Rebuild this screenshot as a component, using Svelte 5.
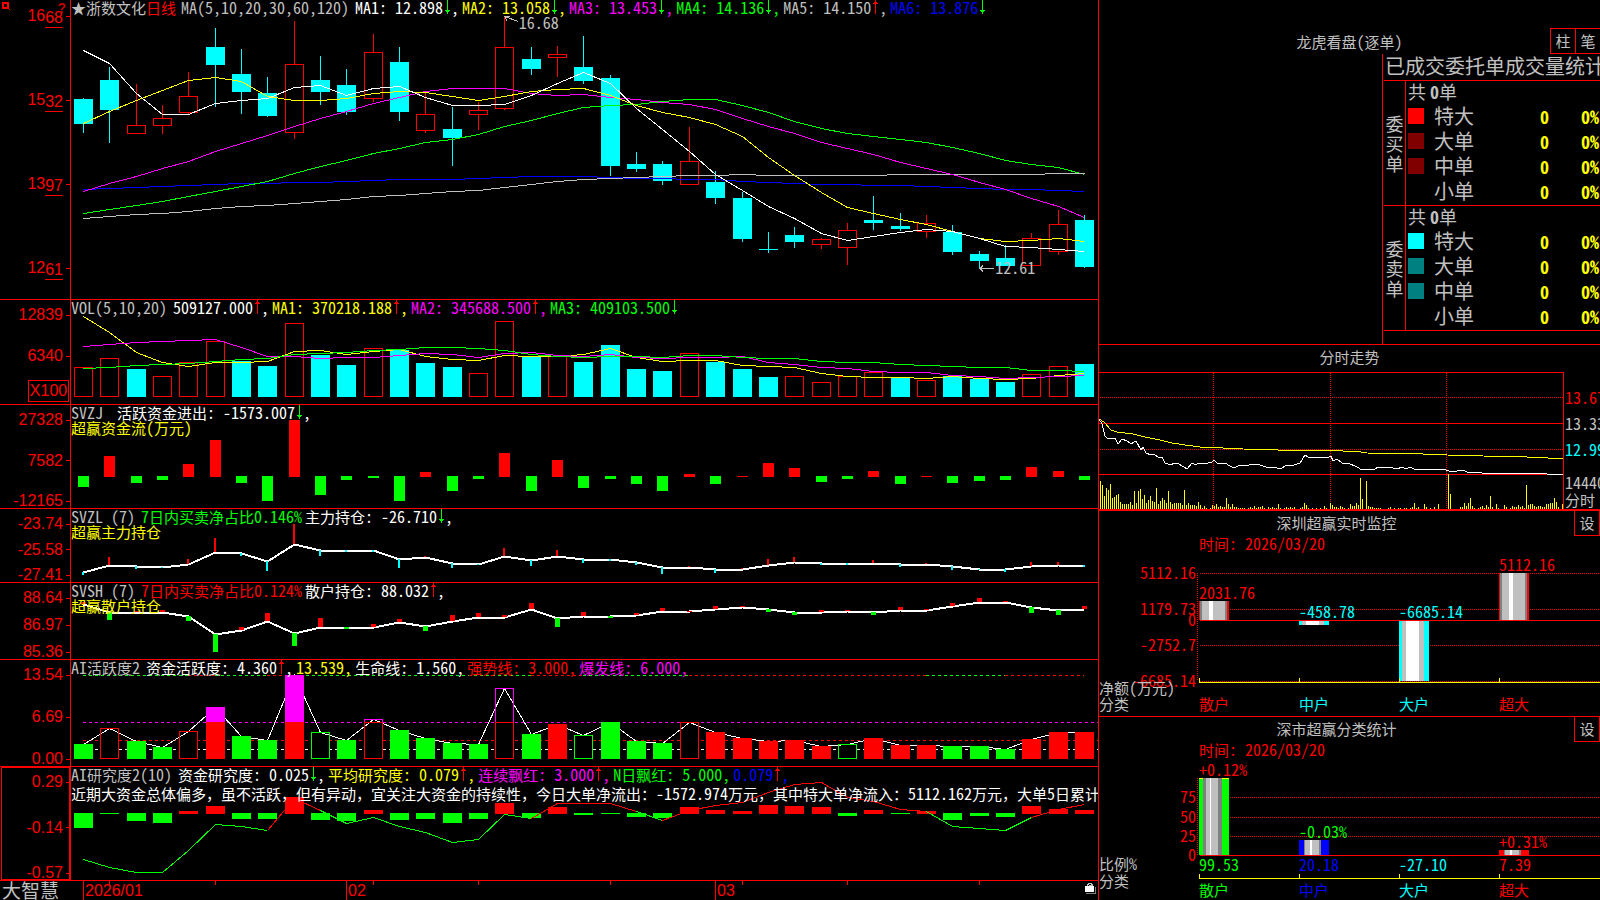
<script lang="ts">
	type Arrow = 'up' | 'down';

	interface LegendItem {
		text: string;
		color: string;
		arrow?: Arrow;
		comma?: boolean;
	}

	const red = '#f00';
	const green = '#0f0';
	const cyan = '#0ff';
	const yellow = '#ff0';
	const magenta = '#f0f';
	const blue = '#00f';
	const gray = '#c0c0c0';
	const white = '#fff';

	// one column per trading day
	const STEP = 26.34;
	const col = (i: number) => 12 + Math.round(i * STEP);
	const line = (ys: number[], from = 0, to = ys.length - 1) =>
		ys
			.slice(from, to + 1)
			.map((y, k) => `${col(from + k) + 0.5},${y + 0.5}`)
			.join(' ');

	// splits mixed text so that latin runs can use the half-width face
	const runs = (text: string) => text.split(/([\x20-\x7e]+)/).filter(Boolean);
	const isLatin = (text: string) => /^[\x20-\x7e]/.test(text);

	// [rising, high, top, bottom, low]
	const candles = [
		[0, 98, 99, 124, 133], [0, 67, 80, 110, 143], [1, 84, 125, 134, 134], [1, 105, 118, 126, 134],
		[1, 72, 96, 113, 114], [0, 28, 47, 65, 107], [0, 49, 74, 92, 114], [0, 77, 93, 116, 117],
		[1, 21, 64, 133, 139], [0, 56, 80, 92, 105], [0, 69, 85, 112, 115], [1, 34, 52, 99, 102],
		[0, 47, 62, 112, 121], [1, 93, 114, 131, 133], [0, 107, 129, 138, 166], [1, 102, 110, 115, 130],
		[1, 16, 47, 109, 110], [0, 47, 59, 69, 75], [1, 46, 54, 58, 77], [0, 36, 67, 81, 84],
		[0, 75, 78, 166, 176], [0, 152, 164, 169, 172], [0, 161, 164, 181, 185], [1, 127, 161, 185, 185],
		[0, 171, 182, 198, 204], [0, 192, 198, 239, 242], [0, 232, 249, 250, 253], [0, 227, 235, 242, 248],
		[1, 238, 239, 245, 249], [1, 223, 230, 248, 265], [0, 196, 220, 223, 230], [0, 213, 226, 229, 231],
		[1, 215, 223, 232, 238], [0, 225, 232, 252, 255], [0, 251, 254, 261, 268], [0, 245, 258, 266, 266],
		[1, 233, 238, 266, 269], [1, 210, 224, 252, 255], [0, 215, 220, 267, 268]
	];

	const priceLines = [
		{ color: blue, ys: [189, 188, 187, 186, 185, 184, 183, 183, 182, 182, 181, 180, 179, 179, 179, 178, 177, 176, 176, 176, 177, 178, 178, 179, 179, 181, 182, 183, 184, 184, 185, 185, 186, 187, 188, 189, 189, 190, 191] },
		{ color: green, ys: [213, 209, 205, 201, 196, 191, 186, 181, 173, 166, 160, 153, 148, 142, 139, 134, 126, 120, 113, 107, 105, 104, 101, 99, 99, 105, 112, 121, 128, 133, 136, 139, 142, 147, 153, 160, 164, 167, 174] },
		{ color: gray, ys: [218, 216, 214, 213, 211, 208, 206, 205, 203, 201, 199, 196, 195, 193, 191, 190, 187, 184, 181, 179, 178, 177, 176, 175, 175, 174, 175, 175, 175, 175, 175, 174, 174, 174, 174, 174, 174, 173, 173] },
		{ color: magenta, ys: [191, 183, 176, 168, 161, 151, 143, 135, 126, 118, 111, 103, 97, 91, 88, 88, 88, 93, 95, 94, 97, 99, 102, 104, 109, 118, 126, 133, 142, 148, 154, 162, 168, 174, 182, 189, 198, 206, 217] },
		{ color: yellow, ys: [123, 111, 100, 90, 80, 77, 81, 96, 100, 100, 98, 93, 91, 92, 96, 100, 96, 91, 89, 88, 95, 105, 112, 117, 124, 136, 157, 175, 192, 207, 213, 219, 224, 231, 238, 241, 240, 238, 241] },
		{ color: white, ys: [50, 63, 93, 114, 114, 103, 100, 98, 87, 85, 95, 88, 86, 97, 105, 105, 104, 95, 83, 72, 83, 108, 129, 151, 174, 190, 206, 218, 233, 240, 236, 232, 229, 231, 238, 246, 247, 249, 251] }
	];

	const volumeKinds = 'rrcrrrccrccrcccrrcrccccrcccrrrrcrcccrrc';
	const volumes = [67, 58, 69, 76, 62, 41, 61, 66, 23, 55, 65, 48, 50, 63, 67, 73, 21, 56, 56, 62, 45, 69, 71, 53, 62, 69, 77, 76, 82, 76, 72, 78, 80, 76, 79, 82, 74, 66, 64];
	const volumeLines = [
		{ color: yellow, ys: [16, 32, 52, 62, 66, 62, 62, 61, 51, 50, 54, 51, 49, 56, 59, 60, 55, 56, 56, 54, 48, 57, 61, 60, 60, 65, 66, 67, 73, 76, 77, 77, 78, 76, 78, 79, 78, 75, 73] },
		{ color: magenta, ys: [46, 44, 42, 41, 40, 39, 47, 56, 56, 58, 57, 57, 55, 53, 54, 57, 53, 52, 55, 56, 54, 57, 58, 57, 57, 56, 62, 64, 67, 68, 71, 72, 72, 75, 76, 78, 77, 76, 75] },
		{ color: green, ys: [68, 67, 65, 64, 63, 61, 59, 58, 54, 53, 52, 50, 49, 47, 47, 48, 50, 54, 56, 57, 56, 56, 57, 55, 55, 57, 58, 58, 61, 62, 62, 64, 65, 66, 67, 67, 70, 70, 71] }
	];

	const flows = [82, 51, 78, 75, 59, 35, 78, 96, 15, 90, 75, 73, 96, 67, 86, 74, 48, 86, 55, 83, 74, 79, 86, 69, 79, 71, 58, 63, 77, 74, 66, 79, 71, 78, 76, 75, 62, 66, 75];

	const mainHold = [63, 56, 57, 58, 55, 43, 44, 52, 35, 41, 41, 41, 50, 48, 54, 55, 47, 51, 47, 50, 50, 53, 58, 58, 60, 60, 56, 53, 54, 54, 54, 55, 55, 57, 60, 60, 57, 56, 56];
	const mainSticks = [66, 48, 60, 59, 50, 29, 47, 62, 15, 47, 43, 43, 59, 47, 59, 56, 39, 57, 41, 54, 52, 56, 65, 57, 64, 59, 50, 48, 56, 56, 51, 58, 54, 61, 61, 63, 53, 53, 58];
	const retailHold = [21, 29, 29, 29, 33, 51, 47, 38, 50, 44, 44, 44, 39, 43, 38, 34, 34, 26, 35, 33, 33, 32, 28, 28, 26, 24, 26, 29, 29, 28, 29, 27, 27, 23, 19, 19, 24, 27, 26];
	const retailSticks = [19, 37, 28, 27, 38, 69, 44, 30, 63, 35, 46, 41, 36, 48, 32, 30, 32, 20, 44, 29, 35, 30, 25, 28, 23, 23, 29, 32, 27, 27, 32, 24, 26, 20, 15, 18, 30, 32, 23];

	// G / R filled, g / r outlined
	const activeKinds = 'GrGGrRGGRgGrGGGGrGRgGGGrRRRRRgRRRGGGRRR';
	const active = [84, 68, 81, 87, 71, 47, 76, 80, 15, 72, 80, 59, 70, 78, 83, 84, 28, 74, 64, 75, 62, 81, 83, 62, 72, 78, 81, 80, 86, 84, 78, 85, 85, 86, 86, 89, 79, 72, 72];
	const activeTop = [
		[0, 4, green], [4, 5, red], [5, 7, green], [7, 8, red], [8, 17, green],
		[17, 19, red], [19, 23, green], [23, 32, red], [32, 35, green], [35, 38, red]
	] as [number, number, string][];

	const study = [61, 47, 54, 56, 44, 39, 52, 52, 30, 53, 54, 43, 53, 52, 56, 52, 36, 51, 40, 48, 47, 50, 51, 40, 43, 44, 38, 39, 40, 49, 43, 47, 44, 53, 49, 50, 39, 42, 43];
	const studyLine = [92, 100, 105, 105, 83, 57, 59, 63, 31, 43, 56, 50, 59, 65, 75, 72, 47, 51, 36, 36, 36, 44, 53, 43, 38, 35, 25, 17, 15, 30, 34, 42, 44, 59, 61, 63, 50, 42, 37];
	const studyParts = [
		[0, 7, green], [7, 9, red], [9, 17, green], [17, 21, red],
		[21, 22, green], [22, 32, red], [32, 36, green], [36, 38, red]
	] as [number, number, string][];

	const legends: Record<string, LegendItem[]> = {
		price: [
			{ text: 'MA1: 12.898', color: white, arrow: 'down', comma: true },
			{ text: 'MA2: 13.058', color: yellow, arrow: 'down', comma: true },
			{ text: 'MA3: 13.453', color: magenta, arrow: 'down', comma: true },
			{ text: 'MA4: 14.136', color: green, arrow: 'down', comma: true },
			{ text: 'MA5: 14.150', color: gray, arrow: 'up', comma: true },
			{ text: 'MA6: 13.876', color: blue, arrow: 'down' }
		],
		volume: [
			{ text: '509127.000', color: white, arrow: 'up', comma: true },
			{ text: 'MA1: 370218.188', color: yellow, arrow: 'up', comma: true },
			{ text: 'MA2: 345688.500', color: magenta, arrow: 'up', comma: true },
			{ text: 'MA3: 409103.500', color: green, arrow: 'down' }
		],
		flow: [{ text: '活跃资金进出: -1573.007', color: white, arrow: 'down', comma: true }],
		main: [
			{ text: '7日内买卖净占比0.146%', color: green },
			{ text: '主力持仓: -26.710', color: white, arrow: 'down', comma: true }
		],
		retail: [
			{ text: '7日内买卖净占比0.124%', color: red },
			{ text: '散户持仓: 88.032', color: white, arrow: 'up', comma: true }
		],
		active: [
			{ text: '资金活跃度: 4.360', color: white, arrow: 'up', comma: true },
			{ text: '13.539', color: yellow, comma: true },
			{ text: '生命线: 1.560', color: white, comma: true },
			{ text: '强势线: 3.000', color: red, comma: true },
			{ text: '爆发线: 6.000', color: magenta, comma: true }
		],
		study: [
			{ text: '资金研究度: 0.025', color: white, arrow: 'down', comma: true },
			{ text: '平均研究度: 0.079', color: yellow, arrow: 'up', comma: true },
			{ text: '连续飘红: 3.000', color: magenta, arrow: 'up', comma: true },
			{ text: 'N日飘红: 5.000', color: green, comma: true },
			{ text: '0.079', color: blue, arrow: 'up', comma: true }
		]
	};

	const orderGroups = [
		{ side: '委买单', colors: ['#f00', '#800000', '#800000', ''] },
		{ side: '委卖单', colors: ['#0ff', '#008080', '#008080', ''] }
	];
	const orderNames = ['特大', '大单', '中单', '小单'];

	const minuteAvg = '0,47 5,50 12,58 18,60 34,62 46,65 61,68 73,71 86,73 101,75 124,76 144,77 179,78 231,78 244,79 262,80 268,81 324,82 348,83 384,84 428,85 449,86 464,87';
	const minutePrice =
		'0,47 3,52 6,64 8,66 13,67 16,66 19,72 23,67 28,69 32,72 37,69 42,78 44,75 47,81 52,83 55,82 60,86 63,85 66,91 72,93 75,91 80,92 88,97 93,91 97,93 99,91 105,92 113,90 115,88 118,91 122,91 126,91 131,94 135,96 141,93 146,94 154,92 161,93 167,95 173,95 178,96 183,96 188,93 195,93 201,91 206,83 209,85 221,85 228,86 232,84 234,89 238,87 243,91 249,91 258,95 263,98 266,97 269,98 272,97 275,98 279,95 294,96 298,97 303,95 307,97 311,95 315,97 321,98 344,97 350,99 358,99 364,98 368,100 383,101 389,101 392,102 396,101 428,101 430,102 436,101 441,102 445,101 448,102 464,102';
	const minuteVolume = [
		28, 24, 13, 21, 19, 25, 11, 12, 14, 15, 7, 5, 5, 5, 5, 7, 4, 18, 6, 18, 20, 10, 14, 6, 9, 13, 8, 7, 21, 5, 8, 11, 9, 6, 18, 7, 5, 6, 6, 6,
		6, 4, 19, 4, 6, 4, 4, 4, 3, 7, 4, 1, 3, 1, 0, 1, 4, 3, 5, 2, 3, 2, 2, 11, 5, 2, 5, 2, 2, 1, 1, 1, 1, 0, 1, 2, 1, 3, 1, 2,
		2, 3, 1, 0, 2, 1, 2, 1, 1, 5, 1, 0, 1, 2, 1, 2, 1, 2, 0, 0, 1, 2, 6, 4, 1, 0, 1, 0, 1, 0, 1, 0, 3, 1, 0, 6, 4, 2, 2, 1,
		3, 2, 1, 0, 1, 5, 3, 3, 6, 4, 31, 10, 0, 28, 3, 2, 2, 1, 1, 1, 1, 0, 0, 0, 1, 2, 0, 1, 0, 1, 1, 0, 1, 1, 0, 1, 2, 6, 1, 2,
		0, 0, 5, 2, 0, 1, 0, 2, 0, 5, 0, 0, 0, 0, 35, 15, 0, 0, 0, 0, 2, 2, 6, 3, 6, 11, 3, 1, 0, 1, 2, 3, 1, 4, 2, 13, 2, 0, 5, 1,
		0, 0, 4, 2, 0, 1, 3, 2, 2, 4, 2, 3, 1, 24, 4, 5, 5, 3, 2, 3, 3, 2, 2, 5, 5, 6, 6, 11, 7, 2, 0, 5
	];

	// stripes: [offset, width, colour], '' takes the bar's own colour
	type Stripe = [number, number, string];
	const risePattern: Stripe[] = [[0, 30, ''], [1, 27, '#808080'], [3, 23, gray], [10, 4, white]];
	const fallPattern: Stripe[] = [[0, 30, ''], [3, 22, gray], [7, 13, white]];
	const widePattern: Stripe[] = [[0, 30, ''], [4, 19, '#808080'], [7, 12, gray], [11, 1, white]];
	const ratioPattern: Stripe[] = [[0, 30, ''], [5, 17, '#808080'], [6, 14, gray], [11, 2, white]];

	const netScale = [
		{ text: '5112.16', y: 21 },
		{ text: '1179.73', y: 57 },
		{ text: '0', y: 68 },
		{ text: '-2752.7', y: 93 },
		{ text: '-6685.14', y: 129 }
	];
	const netBars = [
		{ name: '散户', value: '2031.76', color: red, top: 49, bottom: 68, label: 41, stripes: risePattern },
		{ name: '中户', value: '-458.78', color: cyan, top: 69, bottom: 73, label: 60, stripes: fallPattern },
		{ name: '大户', value: '-6685.14', color: cyan, top: 69, bottom: 129, label: 60, stripes: fallPattern },
		{ name: '超大', value: '5112.16', color: red, top: 21, bottom: 68, label: 13, stripes: risePattern }
	];

	const ratioScale = [
		{ text: '75', y: 39 },
		{ text: '50', y: 59 },
		{ text: '25', y: 78 },
		{ text: '0', y: 97 }
	];
	const ratioBars = [
		{ name: '散户', value: '99.53', change: '+0.12%', changeColor: red, color: green, top: 20, label: 12, stripes: widePattern },
		{ name: '中户', value: '20.18', change: '-0.03%', changeColor: green, color: blue, top: 82, label: 74, stripes: ratioPattern },
		{ name: '大户', value: '-27.10', change: '', changeColor: cyan, color: cyan, top: 97, label: 84, stripes: [] as Stripe[] },
		{ name: '超大', value: '7.39', change: '+0.31%', changeColor: red, color: red, top: 92, label: 84, stripes: ratioPattern }
	];
	const barX = (i: number) => 100 + i * 100;
</script>

{#snippet mixed(text: string)}{#each runs(text) as run}{#if isLatin(run)}<span class="latin">{run}</span>{:else}{run}{/if}{/each}{/snippet}

{#snippet arrowIcon(dir: Arrow)}
	<svg class="arrow" width="8" height="15" viewBox="0 0 8 15">
		{#if dir === 'up'}
			<path d="M4.5 0v14M2 3.5h5M3 2.5h3" stroke={red} />
		{:else}
			<path d="M4.5 0v14M2 10.5h5M3 11.5h3" stroke={green} />
		{/if}
	</svg>
{/snippet}

{#snippet items(list: LegendItem[])}
	{#each list as item}
		<span class="item" style:color={item.color}>
			<span>{@render mixed(item.text)}</span>
			{#if item.arrow}{@render arrowIcon(item.arrow)}{/if}
			{#if item.comma}<span class="latin">,</span>{/if}
		</span>
	{/each}
{/snippet}

{#snippet legend(title: string, list: LegendItem[])}
	<div class="legend">
		<span class="name">{@render mixed(title)}</span>
		{@render items(list)}
	</div>
{/snippet}

{#snippet scale(labels: string[])}
	<div class="ticks">
		{#each labels as label}
			<span class="tick">{label}</span>
		{/each}
	</div>
{/snippet}

<main class="page">
	<div class="charts">
		<section class="row price">
			<div class="gutter">
				<svg class="pin" width="9" height="9" viewBox="0 0 9 9">
					<path d="M2 2h5v5H2z" fill="none" stroke={red} stroke-width="2" />
					<path d="M8 8h1v1H8z" fill={red} />
				</svg>
				<b class="help">?</b>
				<div class="ticks">
					{#each ['1668', '1532', '1397', '1261'] as label}
						<span class="tick">{label.slice(0, 2)}<span class="under">{label.slice(2)}</span></span>
					{/each}
				</div>
			</div>
			<div class="plot">
				<svg class="chart" viewBox="0 0 1027 299" preserveAspectRatio="none">
					{#each candles as [up, high, top, bottom, low], i}
						{#if up}
							<path d="M{col(i) + 0.5} {high}V{top}M{col(i) + 0.5} {bottom}V{low}" stroke={red} />
							<rect x={col(i) - 8.5} y={top + 0.5} width="18" height={bottom - top - 1} fill="none" stroke={red} />
						{:else}
							<rect x={col(i)} y={high} width="1" height={low - high} fill={cyan} />
							<rect x={col(i) - 9} y={top} width="19" height={bottom - top} fill={cyan} />
						{/if}
					{/each}
					{#each priceLines as l}
						<polyline points={line(l.ys)} stroke={l.color} />
					{/each}
					<path d="M433.5 16.5l14 5M434 16.5h5M434 17l2 4M909 268.5h14M912 265.5l-3 3 3 3" stroke={gray} fill="none" />
				</svg>
				<div class="legend">
					<span class="name">★浙数文化<span class="period">日线</span>{@render mixed('MA(5,10,20,30,60,120)')}</span>
					{@render items(legends.price)}
				</div>
				<span class="mark latin high">16.68</span>
				<span class="mark latin low">12.61</span>
			</div>
		</section>

		<section class="row">
			<div class="gutter volume">
				{@render scale(['12839', '6340'])}
				<span class="unit">X100</span>
			</div>
			<div class="plot">
				<svg class="chart" viewBox="0 0 1027 104" preserveAspectRatio="none">
					{#each volumes as top, i}
						{#if volumeKinds[i] === 'r'}
							<rect x={col(i) - 8.5} y={top + 0.5} width="18" height={96 - top} fill="none" stroke={red} />
						{:else}
							<rect x={col(i) - 9} y={top} width="19" height={97 - top} fill={cyan} />
						{/if}
					{/each}
					{#each volumeLines as l}
						<polyline points={line(l.ys)} stroke={l.color} />
					{/each}
				</svg>
				{@render legend('VOL(5,10,20)', legends.volume)}
			</div>
		</section>

		<section class="row">
			<div class="gutter">{@render scale(['27328', '7582', '-12165'])}</div>
			<div class="plot">
				<svg class="chart" viewBox="0 0 1027 103" preserveAspectRatio="none">
					{#each flows as end, i}
						{#if end < 72}
							<rect x={col(i) - 5} y={end} width="11" height={72 - end} fill={red} />
						{:else}
							<rect x={col(i) - 5} y="71" width="11" height={end - 71} fill={green} />
						{/if}
					{/each}
				</svg>
				<div class="notes">
					{@render legend('SVZJ ', legends.flow)}
					<p class="caption">{@render mixed('超赢资金流(万元)')}</p>
				</div>
			</div>
		</section>

		<section class="row">
			<div class="gutter">{@render scale(['-23.74', '-25.58', '-27.41'])}</div>
			<div class="plot">
				<svg class="chart" viewBox="0 0 1027 73" preserveAspectRatio="none">
					<polyline points={line(mainHold)} stroke={white} stroke-width="2" />
					{#each mainSticks as end, i}
						<rect x={col(i) - 1} y={Math.min(end, mainHold[i])} width="2" height={Math.max(1, Math.abs(end - mainHold[i]))} fill={end < mainHold[i] ? red : cyan} />
					{/each}
				</svg>
				<div class="notes">
					{@render legend('SVZL (7)', legends.main)}
					<p class="caption">超赢主力持仓</p>
				</div>
			</div>
		</section>

		<section class="row">
			<div class="gutter">{@render scale(['88.64', '86.97', '85.36'])}</div>
			<div class="plot">
				<svg class="chart" viewBox="0 0 1027 76" preserveAspectRatio="none">
					<polyline points={line(retailHold)} stroke={white} stroke-width="2" />
					{#each retailSticks as end, i}
						<rect x={col(i) - 2} y={Math.min(end, retailHold[i])} width="5" height={Math.max(1, Math.abs(end - retailHold[i]))} fill={end <= retailHold[i] ? red : green} />
					{/each}
				</svg>
				<div class="notes">
					{@render legend('SVSH (7)', legends.retail)}
					<p class="caption">超赢散户持仓</p>
				</div>
			</div>
		</section>

		<section class="row">
			<div class="gutter">{@render scale(['13.54', '6.69', '0.00'])}</div>
			<div class="plot">
				<svg class="chart" viewBox="0 0 1027 106" preserveAspectRatio="none">
					{#each activeTop as [from, to, color]}
						<path class="dash" d="M{col(from)} 15.5H{col(to)}" stroke={color} />
					{/each}
					<path class="dash" d="M12 62.5H1027" stroke={magenta} />
					<path class="dash" d="M12 80.5H1027" stroke={red} />
					<path class="dash" d="M12 89.5H1027" stroke={white} />
					{#each active as top, i}
						<rect x={col(i) - 9} y={top} width="19" height={99 - top} fill="#000" />
					{/each}
					<polyline points={line(active)} stroke={white} />
					{#each active as top, i}
						{@const kind = activeKinds[i]}
						{#if kind === 'G' || kind === 'R'}
							<rect x={col(i) - 9} y={top} width="19" height={99 - top} fill={kind === 'G' ? green : red} />
							{#if top < 62 && kind === 'R'}
								<rect x={col(i) - 9} y={top} width="19" height={62 - top} fill={magenta} />
							{/if}
						{:else}
							<rect x={col(i) - 8.5} y={Math.max(top, 62) + 0.5} width="18" height={98 - Math.max(top, 62)} fill="none" stroke={kind === 'g' ? green : red} />
							{#if top < 62}
								<path d="M{col(i) - 8.5} 62V{top + 0.5}h18V62" fill="none" stroke={magenta} />
							{/if}
						{/if}
					{/each}
				</svg>
				{@render legend('AI活跃度2', legends.active)}
			</div>
		</section>

		<section class="row">
			<div class="gutter selected">{@render scale(['0.29', '-0.14', '-0.57'])}</div>
			<div class="plot">
				<svg class="chart" viewBox="0 0 1027 113" preserveAspectRatio="none">
					{#each study as end, i}
						{#if end < 46}
							<rect x={col(i) - 9} y={end} width="19" height={47 - end} fill={red} />
						{:else}
							<rect x={col(i) - 9} y="46" width="19" height={end - 46} fill={green} />
						{/if}
					{/each}
					{#each studyParts as [from, to, color]}
						<polyline points={line(studyLine, from, to)} stroke={color} />
					{/each}
				</svg>
				<div class="notes">
					{@render legend('AI研究度2(10)', legends.study)}
					<p class="comment">{@render mixed('近期大资金总体偏多，虽不活跃，但有异动，宜关注大资金的持续性，今日大单净流出：-1572.974万元，其中特大单净流入：5112.162万元，大单5日累计')}</p>
				</div>
			</div>
		</section>

		<footer class="row dates">
			<span class="brand">大智慧</span>
			<div class="plot">
				<svg class="chart" viewBox="0 0 1027 19" preserveAspectRatio="none">
					{#each [1, 5, 11, 15, 20, 25, 29, 34] as i}
						<rect x={col(i)} y="0" width="1" height="4" fill={red} />
					{/each}
				</svg>
				<div class="months">
					<span>2026/01</span>
					<span>02</span>
					<span>03</span>
				</div>
				<svg class="lock" width="11" height="12" viewBox="0 0 11 12">
					<path d="M10.5 5v6.5H1" fill="none" stroke="#808080" />
					<path d="M2.5 4V2.5h1V1h3v1.5h1V4" fill="none" stroke={gray} />
					<path d="M4 3.5h3" stroke={gray} />
					<rect y="4" width="9" height="6" fill={white} />
				</svg>
			</div>
		</footer>
	</div>

	<aside class="side">
		<section class="tape">
			<header>
				<h2>{@render mixed('龙虎看盘(逐单)')}</h2>
				<div class="buttons">
					<button type="button">柱</button>
					<button type="button">笔</button>
				</div>
			</header>
			<div class="orders">
				<table>
					<caption><span>已成交委托单成交量统计</span></caption>
					<colgroup>
						<col width="22" />
						<col width="28" />
						<col width="70" />
						<col width="46" />
						<col width="50" />
					</colgroup>
					{#each orderGroups as group}
						<tbody>
							<tr>
								<th class="trade" rowspan="5" scope="rowgroup">{group.side}</th>
								<td class="total" colspan="4">共 <b>0</b>单</td>
							</tr>
							{#each orderNames as name, i}
								<tr>
									<td class="key"><span class="swatch" style:background={group.colors[i]}></span></td>
									<th scope="row">{name}</th>
									<td class="count">0</td>
									<td class="count">0%</td>
								</tr>
							{/each}
						</tbody>
					{/each}
				</table>
			</div>
		</section>

		<section class="minute">
			<h2>分时走势</h2>
			<div class="body">
				<svg class="chart" viewBox="0 0 465 137" preserveAspectRatio="none">
					<path d="M0 .5H464.5V137M0 51.5H464M0 102.5H464" stroke={red} fill="none" />
					<path class="dots" d="M1 25.5H464M1 77.5H464M114.5 1V137M231.5 1V137M347.5 1V137" stroke={red} />
					{#each minuteVolume as h, k}
						<rect x={1 + k * 2} y={137 - h} width="1" height={h} fill={yellow} />
					{/each}
					<polyline points={minuteAvg} stroke={yellow} />
					<polyline points={minutePrice} stroke={white} />
				</svg>
				<div class="prices">
					<span class="latin up">13.67</span>
					<span class="latin">13.33</span>
					<span class="latin down">12.99</span>
					<span class="latin volume">14440</span>
					<span class="unit-name">分时</span>
				</div>
			</div>
		</section>

		<section class="panel net">
			<header>
				<h2>深圳超赢实时监控</h2>
				<button type="button">设</button>
			</header>
			<p class="time">{@render mixed('时间: 2026/03/20')}</p>
			<svg class="bars" width="100%" height="164">
				<path class="dots" d="M98.5 21V129" stroke={red} />
				{#each netScale as s}
					<text class="latin" x="97" y={s.y + 6} text-anchor="end" fill={red}>{s.text}</text>
					<line class:dots={s.text !== '0'} x1="101" x2="100%" y1={s.y + 0.5} y2={s.y + 0.5} stroke={red} />
				{/each}
				<line x1="100" x2="100%" y1="130.5" y2="130.5" stroke={yellow} />
				{#each netBars as bar, i}
					{#each bar.stripes as [x, w, color]}
						<rect x={barX(i) + x} y={bar.top} width={w} height={bar.bottom - bar.top} fill={color || bar.color} />
					{/each}
					<rect x={barX(i)} y="126" width="1" height="4" fill={yellow} />
					<text class="latin" x={barX(i)} y={bar.label + 6} fill={bar.color}>{bar.value}</text>
					<text x={barX(i)} y="158" fill={bar.color}>{bar.name}</text>
				{/each}
				<text y="142" fill={gray}>净额<tspan class="latin">(</tspan>万元<tspan class="latin">)</tspan></text>
				<text y="158" fill={gray}>分类</text>
			</svg>
		</section>

		<section class="panel">
			<header>
				<h2>深市超赢分类统计</h2>
				<button type="button">设</button>
			</header>
			<p class="time">{@render mixed('时间: 2026/03/20')}</p>
			<svg class="bars" width="100%" height="142">
				<path class="dots" d="M98.5 20V97" stroke={red} />
				{#each ratioScale as s}
					<text class="latin" x="97" y={s.y + 6} text-anchor="end" fill={red}>{s.text}</text>
					<line class:dots={s.text !== '0'} x1="101" x2="100%" y1={s.y + 0.5} y2={s.y + 0.5} stroke={red} />
				{/each}
				<line x1="100" x2="100%" y1="120.5" y2="120.5" stroke={yellow} />
				{#each ratioBars as bar, i}
					{#each bar.stripes as [x, w, color]}
						<rect x={barX(i) + x} y={bar.top} width={w} height={97 - bar.top} fill={color || bar.color} />
					{/each}
					<rect x={barX(i)} y="116" width="1" height="4" fill={yellow} />
					{#if bar.change}
						<text class="latin" x={barX(i)} y={bar.label + 6} fill={bar.changeColor}>{bar.change}</text>
					{/if}
					<text class="latin" x={barX(i)} y="113" fill={bar.color}>{bar.value}</text>
					<text x={barX(i)} y="138" fill={bar.color}>{bar.name}</text>
				{/each}
				<path d="M100 20.5h4M123 20.5h7" stroke={yellow} />
				<text y="112" fill={gray}>比例<tspan class="latin">%</tspan></text>
				<text y="129" fill={gray}>分类</text>
			</svg>
		</section>
	</aside>
</main>

<style>
	:global(body) {
		margin: 0;
		background: #000;
		overflow: hidden;
	}

	.page {
		display: grid;
		grid-template-columns: minmax(0, 1fr) 502px;
		height: 100vh;
		background: #000;
		color: #c0c0c0;
		font-family: "Noto Sans CJK SC", sans-serif;
		font-size: 15px;
		line-height: 15px;
		white-space: nowrap;
	}

	.page * {
		box-sizing: border-box;
	}

	h2,
	p {
		margin: 0;
		font-size: 15px;
		font-weight: 400;
	}

	.latin {
		font-size: 16px;
		font-feature-settings: "hwid";
		white-space: pre;
	}

	svg {
		display: block;
		shape-rendering: crispEdges;
	}

	polyline {
		fill: none;
	}

	.dash {
		stroke-dasharray: 3 3;
	}

	.dots {
		stroke-dasharray: 1 1;
	}

	/* left column */
	.charts {
		display: grid;
		grid-template-rows:
			minmax(0, 299fr) minmax(0, 105fr) minmax(0, 104fr) minmax(0, 74fr)
			minmax(0, 77fr) minmax(0, 107fr) minmax(0, 114fr) minmax(0, 20fr);
		min-width: 0;
		overflow: hidden;
	}

	.row {
		display: grid;
		grid-template-columns: 70px minmax(0, 1fr);
		border-top: 1px solid #f00;
		min-height: 0;
	}

	.row.price {
		border-top: none;
	}

	.plot {
		display: grid;
		grid-template: minmax(0, 1fr) / minmax(0, 1fr);
		position: relative;
		border-left: 1px solid #f00;
		min-height: 0;
	}

	.plot > * {
		grid-area: 1 / 1;
	}

	.chart {
		width: 100%;
		height: 100%;
	}

	.legend {
		display: flex;
		align-items: flex-start;
		gap: 3px;
		height: 15px;
	}

	.name {
		padding-right: 3px;
	}

	.period {
		margin-right: 5px;
		color: #f00;
	}

	.item {
		display: flex;
	}

	.caption {
		color: #ff0;
	}

	.comment {
		margin-top: 4px;
		color: #fff;
	}

	.mark {
		position: absolute;
	}

	.mark.high {
		left: 43.6%;
		top: 5%;
	}

	.mark.low {
		left: 90%;
		top: 87%;
	}

	.gutter {
		display: flex;
		flex-direction: column;
		position: relative;
		padding-top: 8px;
		min-height: 0;
	}

	.price .gutter {
		padding: 9px 0 24px;
	}

	.gutter.volume {
		padding-bottom: 2px;
	}

	.gutter.selected::before {
		content: "";
		position: absolute;
		inset: 0 0 0 1px;
		border: 1px solid #f00;
	}

	.ticks {
		display: flex;
		flex: 1;
		flex-direction: column;
		justify-content: space-between;
		min-height: 0;
	}

	.tick {
		display: flex;
		align-items: center;
		justify-content: flex-end;
		height: 14px;
		color: #f00;
		font: 16px/14px "Liberation Sans", sans-serif;
	}

	.tick::after {
		content: "";
		width: 4px;
		height: 1px;
		margin-left: 3px;
		background: #f00;
	}

	.under {
		margin-top: 5px;
		border-bottom: 1px solid #f00;
		line-height: 18px;
	}

	.unit {
		align-self: flex-end;
		width: 41px;
		height: 22px;
		margin: 17px 1px 0 0;
		border: 1px solid #f00;
		color: #f00;
		font: 16px/20px "Liberation Sans", sans-serif;
		text-align: center;
	}

	.pin {
		position: absolute;
		left: 1px;
		top: 1px;
	}

	.help {
		position: absolute;
		right: 4px;
		top: 0;
		color: #c00000;
		font: bold 14px/16px "Liberation Sans", sans-serif;
	}

	.dates .plot {
		border-left-color: #000;
	}

	.brand {
		padding-left: 2px;
		font-size: 19px;
		line-height: 18px;
	}

	.months {
		display: grid;
		grid-template-columns: 263fr 369fr 370fr;
		padding-left: 12px;
		padding-right: 13px;
	}

	.months span {
		padding-left: 1px;
		border-left: 1px solid #f00;
		color: #f00;
		font: 16px/19px "Liberation Sans", sans-serif;
	}

	.lock {
		justify-self: end;
		margin: 1px 2px 0 0;
	}

	/* right column */
	.side {
		display: flex;
		flex-direction: column;
		border-left: 1px solid #f00;
		overflow: hidden;
	}

	.side > section {
		flex-shrink: 0;
	}

	button {
		width: 26px;
		height: 26px;
		padding: 0;
		border: 1px solid #f00;
		background: #000;
		color: #c0c0c0;
		font: 15px/20px "Noto Sans CJK SC", sans-serif;
	}

	.tape {
		display: flex;
		flex-direction: column;
		height: 344px;
	}

	.tape header {
		display: grid;
		grid-template-columns: 1fr auto 1fr;
		align-items: center;
		height: 54px;
		padding-top: 28px;
	}

	.tape h2 {
		grid-column: 2;
	}

	.buttons {
		display: flex;
		justify-self: end;
		margin-right: -1px;
	}

	.buttons button + button {
		margin-left: -1px;
	}

	.orders {
		flex: 1;
		align-self: flex-end;
		width: 218px;
		padding-left: 1px;
		border-left: 1px solid #f00;
	}

	table {
		width: 100%;
		border-spacing: 0;
		table-layout: fixed;
	}

	caption {
		height: 27px;
		padding-left: 1px;
		border-bottom: 1px solid #f00;
		font-size: 20px;
		line-height: 24px;
		text-align: left;
	}

	/* the title runs past the window edge and must not widen the table */
	caption span {
		display: block;
		width: 0;
	}

	tr {
		height: 25px;
	}

	th,
	td {
		height: 25px;
		padding: 0;
		font-size: 20px;
		font-weight: 400;
		line-height: 20px;
		text-align: left;
		vertical-align: top;
	}

	tr:last-child > *,
	.trade {
		border-bottom: 1px solid #f00;
	}

	.trade {
		border-right: 1px solid #f00;
		font-size: 18px;
		line-height: 20px;
		text-align: center;
		vertical-align: middle;
		white-space: normal;
	}

	.total {
		padding-left: 2px;
		font-size: 18px;
	}

	.total b,
	.count {
		font-feature-settings: "hwid";
	}

	.key {
		padding: 2px 0 0 2px;
	}

	.swatch {
		display: block;
		width: 16px;
		height: 16px;
	}

	.count {
		padding-right: 1px;
		color: #ff0;
		font-size: 18px;
		font-weight: 700;
		text-align: right;
	}

	.minute {
		display: flex;
		flex-direction: column;
		height: 165px;
		border-top: 1px solid #f00;
	}

	.minute h2 {
		height: 27px;
		line-height: 23px;
		text-align: center;
	}

	.body {
		display: grid;
		grid-template-columns: minmax(0, 1fr) 36px;
		height: 137px;
	}

	.prices {
		display: flex;
		flex-direction: column;
		padding: 12px 0 0 1px;
	}

	.prices span {
		line-height: 26px;
	}

	.prices .volume,
	.prices .unit-name {
		line-height: 17px;
	}

	.prices .volume {
		margin-top: 12px;
	}

	.up {
		color: #f00;
	}

	.down {
		color: #0ff;
	}

	.panel {
		border-top: 1px solid #f00;
	}

	.panel.net {
		height: 207px;
		border-top-width: 2px;
	}

	.panel header {
		display: grid;
		grid-template-columns: 1fr 26px;
		height: 25px;
	}

	.panel h2 {
		line-height: 24px;
		text-align: center;
	}

	.panel button {
		margin-top: -1px;
	}

	.time {
		height: 16px;
		padding-left: 100px;
		color: #f00;
	}

	.bars text {
		font-size: 15px;
	}

	.bars .latin {
		font-size: 16px;
	}
</style>
